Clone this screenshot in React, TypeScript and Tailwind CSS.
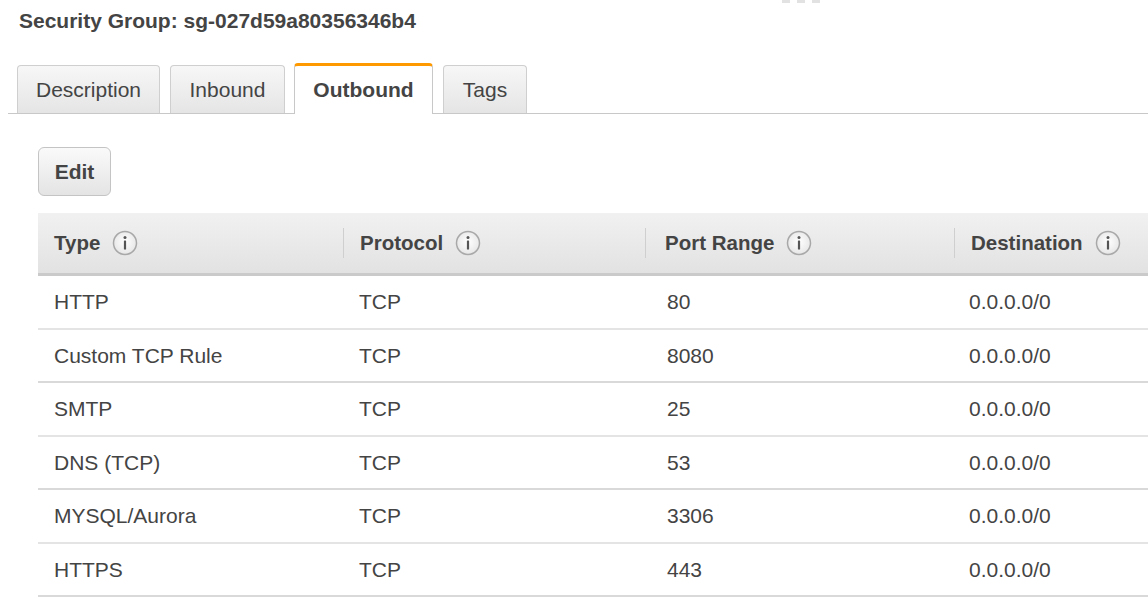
const rows = [
  ['HTTP', 'TCP', '80', '0.0.0.0/0'],
  ['Custom TCP Rule', 'TCP', '8080', '0.0.0.0/0'],
  ['SMTP', 'TCP', '25', '0.0.0.0/0'],
  ['DNS (TCP)', 'TCP', '53', '0.0.0.0/0'],
  ['MYSQL/Aurora', 'TCP', '3306', '0.0.0.0/0'],
  ['HTTPS', 'TCP', '443', '0.0.0.0/0'],
];

function InfoIcon() {
  return (
    <svg width="26" height="26" viewBox="0 0 26 26" className="shrink-0">
      <defs>
        <radialGradient id="ig" cx="50%" cy="45%" r="55%">
          <stop offset="0%" stopColor="#ffffff" />
          <stop offset="100%" stopColor="#e6e6e6" />
        </radialGradient>
      </defs>
      <circle cx="13" cy="13" r="11.5" fill="url(#ig)" stroke="#a8a8a8" strokeWidth="1.5" />
      <circle cx="13" cy="7.6" r="1.5" fill="#555" />
      <rect x="11.9" y="10.5" width="2.2" height="9" rx="0.6" fill="#555" />
    </svg>
  );
}

function Tab({ label, active }: { label: string; active?: boolean }) {
  if (active) {
    return (
      <div className="relative -mb-px flex h-[51px] w-[139px] items-center justify-center rounded-t-[4px] border border-b-0 border-[#c8c8c8] border-t-[3px] border-t-[#f90] bg-white text-[21px] font-bold text-[#444]">
        {label}
      </div>
    );
  }
  return (
    <div className="flex h-[48px] items-center justify-center rounded-t-[4px] border border-b-0 border-[#cfcfcf] bg-gradient-to-b from-[#f7f7f7] to-[#e5e5e5] text-[21px] text-[#444]">
      {label}
    </div>
  );
}

export default function App() {
  return (
    <div className="relative h-[607px] w-[1148px] overflow-hidden bg-white font-['Liberation_Sans',Arial,sans-serif] text-[#444]">
      <div className="absolute left-[782px] top-0 flex gap-[7px]">
        <span className="h-[3px] w-[8px] bg-[#e2e2e2]" />
        <span className="h-[3px] w-[8px] bg-[#e2e2e2]" />
        <span className="h-[3px] w-[8px] bg-[#e2e2e2]" />
      </div>

      <div className="pl-[19px] pt-[9px] text-[21px] font-bold leading-[24px]">
        Security Group: sg-027d59a80356346b4
      </div>

      <div className="ml-[8px] mt-[30px] flex items-end gap-[10px] border-b border-[#c8c8c8] pl-[9px]">
        <div className="w-[143px]">
          <Tab label="Description" />
        </div>
        <div className="-mr-px w-[115px]">
          <Tab label="Inbound" />
        </div>
        <Tab label="Outbound" active />
        <div className="w-[84px]">
          <Tab label="Tags" />
        </div>
      </div>

      <div className="ml-[38px] mt-[33px]">
        <button className="flex h-[49px] w-[73px] items-center justify-center rounded-[6px] border border-[#c4c4c4] bg-gradient-to-b from-[#fafafa] to-[#e4e4e4] text-[21px] font-bold text-[#444]">
          Edit
        </button>
      </div>

      <div className="ml-[38px] mt-[17px] w-[1240px]">
        <div className="grid h-[63px] grid-cols-[305px_302px_309px_1fr] items-center border-b-[3px] border-[#cacaca] bg-gradient-to-b from-[#f1f1f1] to-[#e2e2e2] text-[20.5px] font-bold">
          {['Type', 'Protocol', 'Port Range', 'Destination'].map((h, i) => (
            <div
              key={h}
              className={
                i === 0
                  ? 'flex items-center gap-[12px] pl-[16px]'
                  : i === 2
                    ? 'flex h-[30px] items-center gap-[12px] border-l border-[#cfcfcf] pl-[19px]'
                    : 'flex h-[30px] items-center gap-[12px] border-l border-[#cfcfcf] pl-[16px]'
              }
            >
              <span>{h}</span>
              <InfoIcon />
            </div>
          ))}
        </div>
        {rows.map((r, idx) => (
          <div
            key={idx}
            className={
              'grid h-[53.5px] grid-cols-[305px_302px_309px_1fr] items-center border-b-2 text-[21px] ' +
              (idx % 2 === 1 ? 'border-[#d9d9d9]' : 'border-[#e4e4e4]')
            }
          >
            <div className="pl-[16px]">{r[0]}</div>
            <div className="pl-[16px]">{r[1]}</div>
            <div className="pl-[22px]">{r[2]}</div>
            <div className="pl-[15px]">{r[3]}</div>
          </div>
        ))}
      </div>
    </div>
  );
}
